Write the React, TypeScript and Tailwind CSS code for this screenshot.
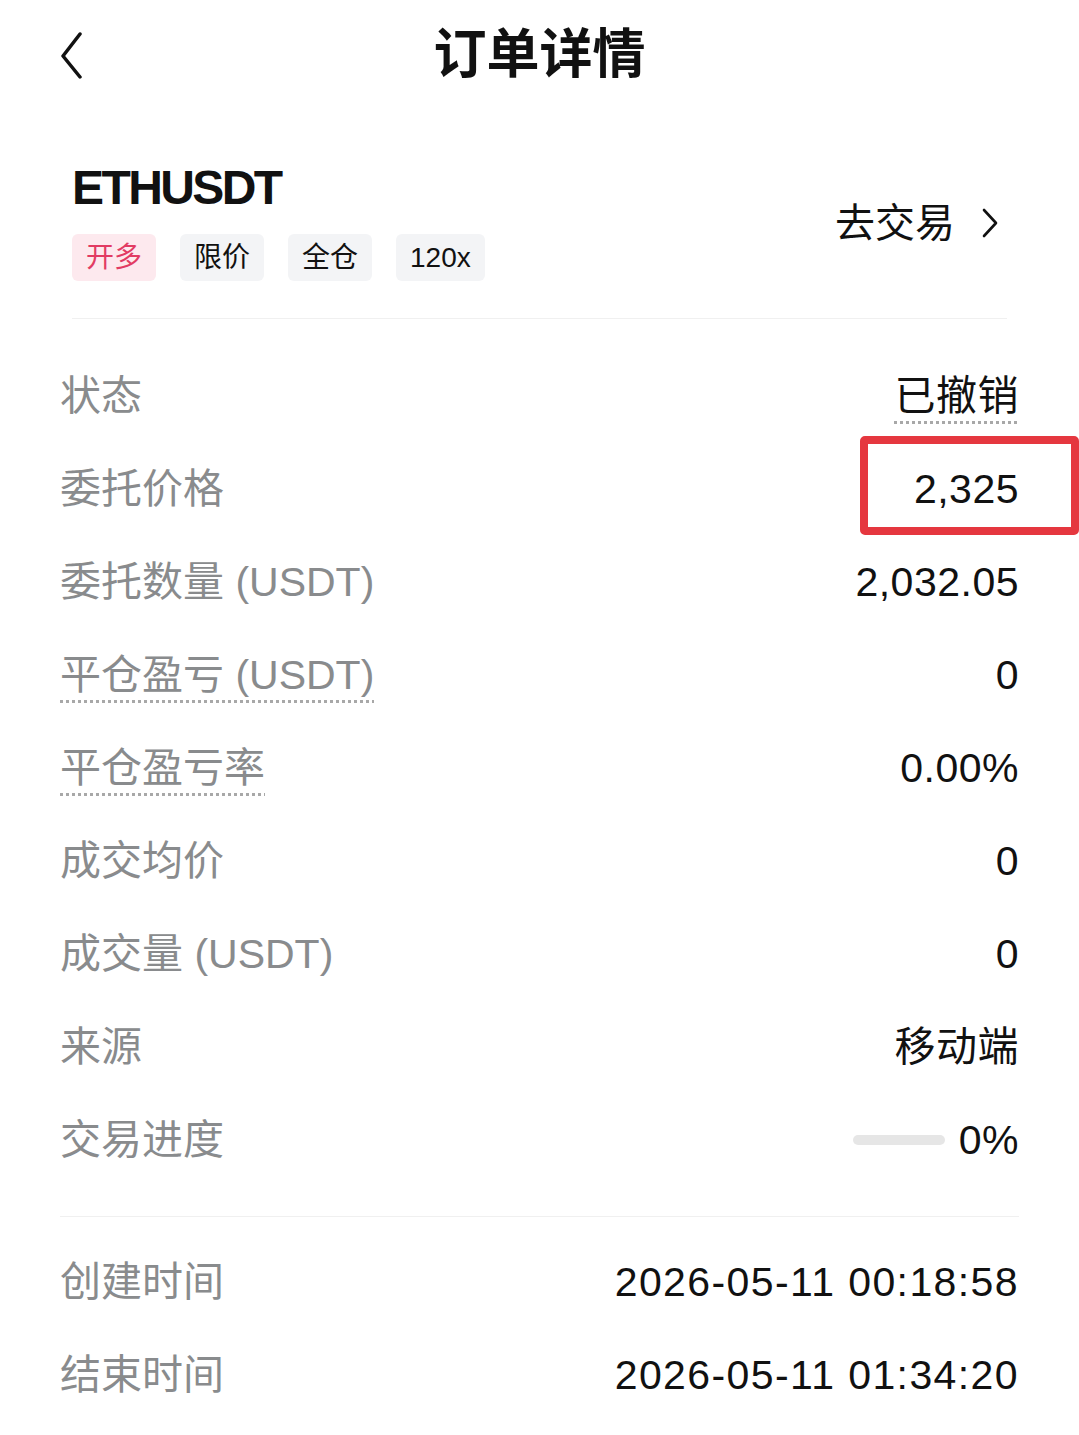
import React from 'react';

interface Row {
    label: string;
    value: React.ReactNode;
    dotted?: boolean;
}

const FONT = { fontFamily: '"Liberation Sans", "Noto Sans CJK SC", sans-serif' };

const tags = [
    { text: '开多', cls: 'bg-[#fde9ee] text-[#e23b63]' },
    { text: '限价', cls: 'bg-[#f3f4f6] text-[#111]' },
    { text: '全仓', cls: 'bg-[#f3f4f6] text-[#111]' },
    { text: '120x', cls: 'bg-[#f3f4f6] text-[#111]' },
];

const rows: Row[] = [
    {
        label: '状态',
        value: (
            <span className="underline decoration-dotted decoration-[#a8a8a8] decoration-[3px] underline-offset-[11px]">
                已撤销
            </span>
        ),
    },
    { label: '委托价格', value: '2,325' },
    { label: '委托数量 (USDT)', value: '2,032.05' },
    { label: '平仓盈亏 (USDT)', value: '0', dotted: true },
    { label: '平仓盈亏率', value: '0.00%', dotted: true },
    { label: '成交均价', value: '0' },
    { label: '成交量 (USDT)', value: '0' },
    { label: '来源', value: '移动端' },
    {
        label: '交易进度',
        value: (
            <span className="flex items-center">
                <span className="mr-[14px] block h-[10px] w-[92px] rounded-full bg-[#e6e6e6]" />
                0%
            </span>
        ),
    },
];

const times = [
    { label: '创建时间', value: '2026-05-11 00:18:58' },
    { label: '结束时间', value: '2026-05-11 01:34:20' },
];

const DetailRow: React.FC<{ row: Row; mono?: boolean }> = ({ row, mono }) => (
    <div className="flex h-[93px] items-center justify-between">
        <span
            className={
                'text-[41px] leading-[40px] text-[#898b8d] ' +
                (row.dotted
                    ? 'underline decoration-dotted decoration-[#a8a8a8] decoration-[3px] underline-offset-[11px]'
                    : '')
            }
        >
            {row.label}
        </span>
        <span
            className={
                'text-[41px] leading-[40px] text-[#111] ' + (mono ? 'tracking-[1.4px]' : 'tracking-[0.5px]')
            }
        >
            {row.value}
        </span>
    </div>
);

const App: React.FC = () => {
    return (
        <div className="relative min-h-[1435px] w-[1079px] overflow-hidden bg-white" style={FONT}>
            {/* nav */}
            <div className="grid h-[110px] grid-cols-[1fr_auto_1fr] items-center">
                <div className="pl-[60px]">
                    <svg width="24" height="48" viewBox="0 0 24 48" fill="none">
                        <polyline
                            points="20,3 3,25 20,46"
                            stroke="#111"
                            strokeWidth="3.5"
                            strokeLinecap="round"
                            strokeLinejoin="round"
                        />
                    </svg>
                </div>
                <h1 className="text-[53px] font-bold leading-[60px] text-[#111]">订单详情</h1>
                <div />
            </div>

            {/* symbol block */}
            <div className="mx-[72px] flex items-center justify-between border-b border-[#f0f0f0] pb-[37px] pt-[54px]">
                <div>
                    <div className="text-[48px] font-bold leading-[48px] tracking-[-2.6px] text-[#111]">ETHUSDT</div>
                    <div className="mt-[22px] flex gap-[24px]">
                        {tags.map((t) => (
                            <span
                                key={t.text}
                                className={'flex h-[47px] items-center rounded-[6px] px-[14px] text-[28px] ' + t.cls}
                            >
                                {t.text}
                            </span>
                        ))}
                    </div>
                </div>
                <div className="mr-[8px] flex items-center gap-[26px] text-[40px] leading-[40px] text-[#111]">
                    <span>去交易</span>
                    <svg width="18" height="30" viewBox="0 0 18 30" fill="none">
                        <polyline
                            points="3,2 15,15 3,28"
                            stroke="#111"
                            strokeWidth="2.6"
                            strokeLinecap="round"
                            strokeLinejoin="round"
                        />
                    </svg>
                </div>
            </div>

            {/* detail rows */}
            <div className="mx-[60px] border-b border-[#f0f0f0] pb-[30px] pt-[30px]">
                {rows.map((r) => (
                    <DetailRow key={r.label} row={r} />
                ))}
            </div>

            <div className="mx-[60px] pt-[18px]">
                {times.map((r) => (
                    <DetailRow key={r.label} row={r} mono />
                ))}
            </div>

            {/* highlight annotation */}
            <div className="absolute left-[860px] top-[436px] h-[99px] w-[219px] rounded-[5px] border-[8px] border-[#e5373f]" />
        </div>
    );
};

export default App;
